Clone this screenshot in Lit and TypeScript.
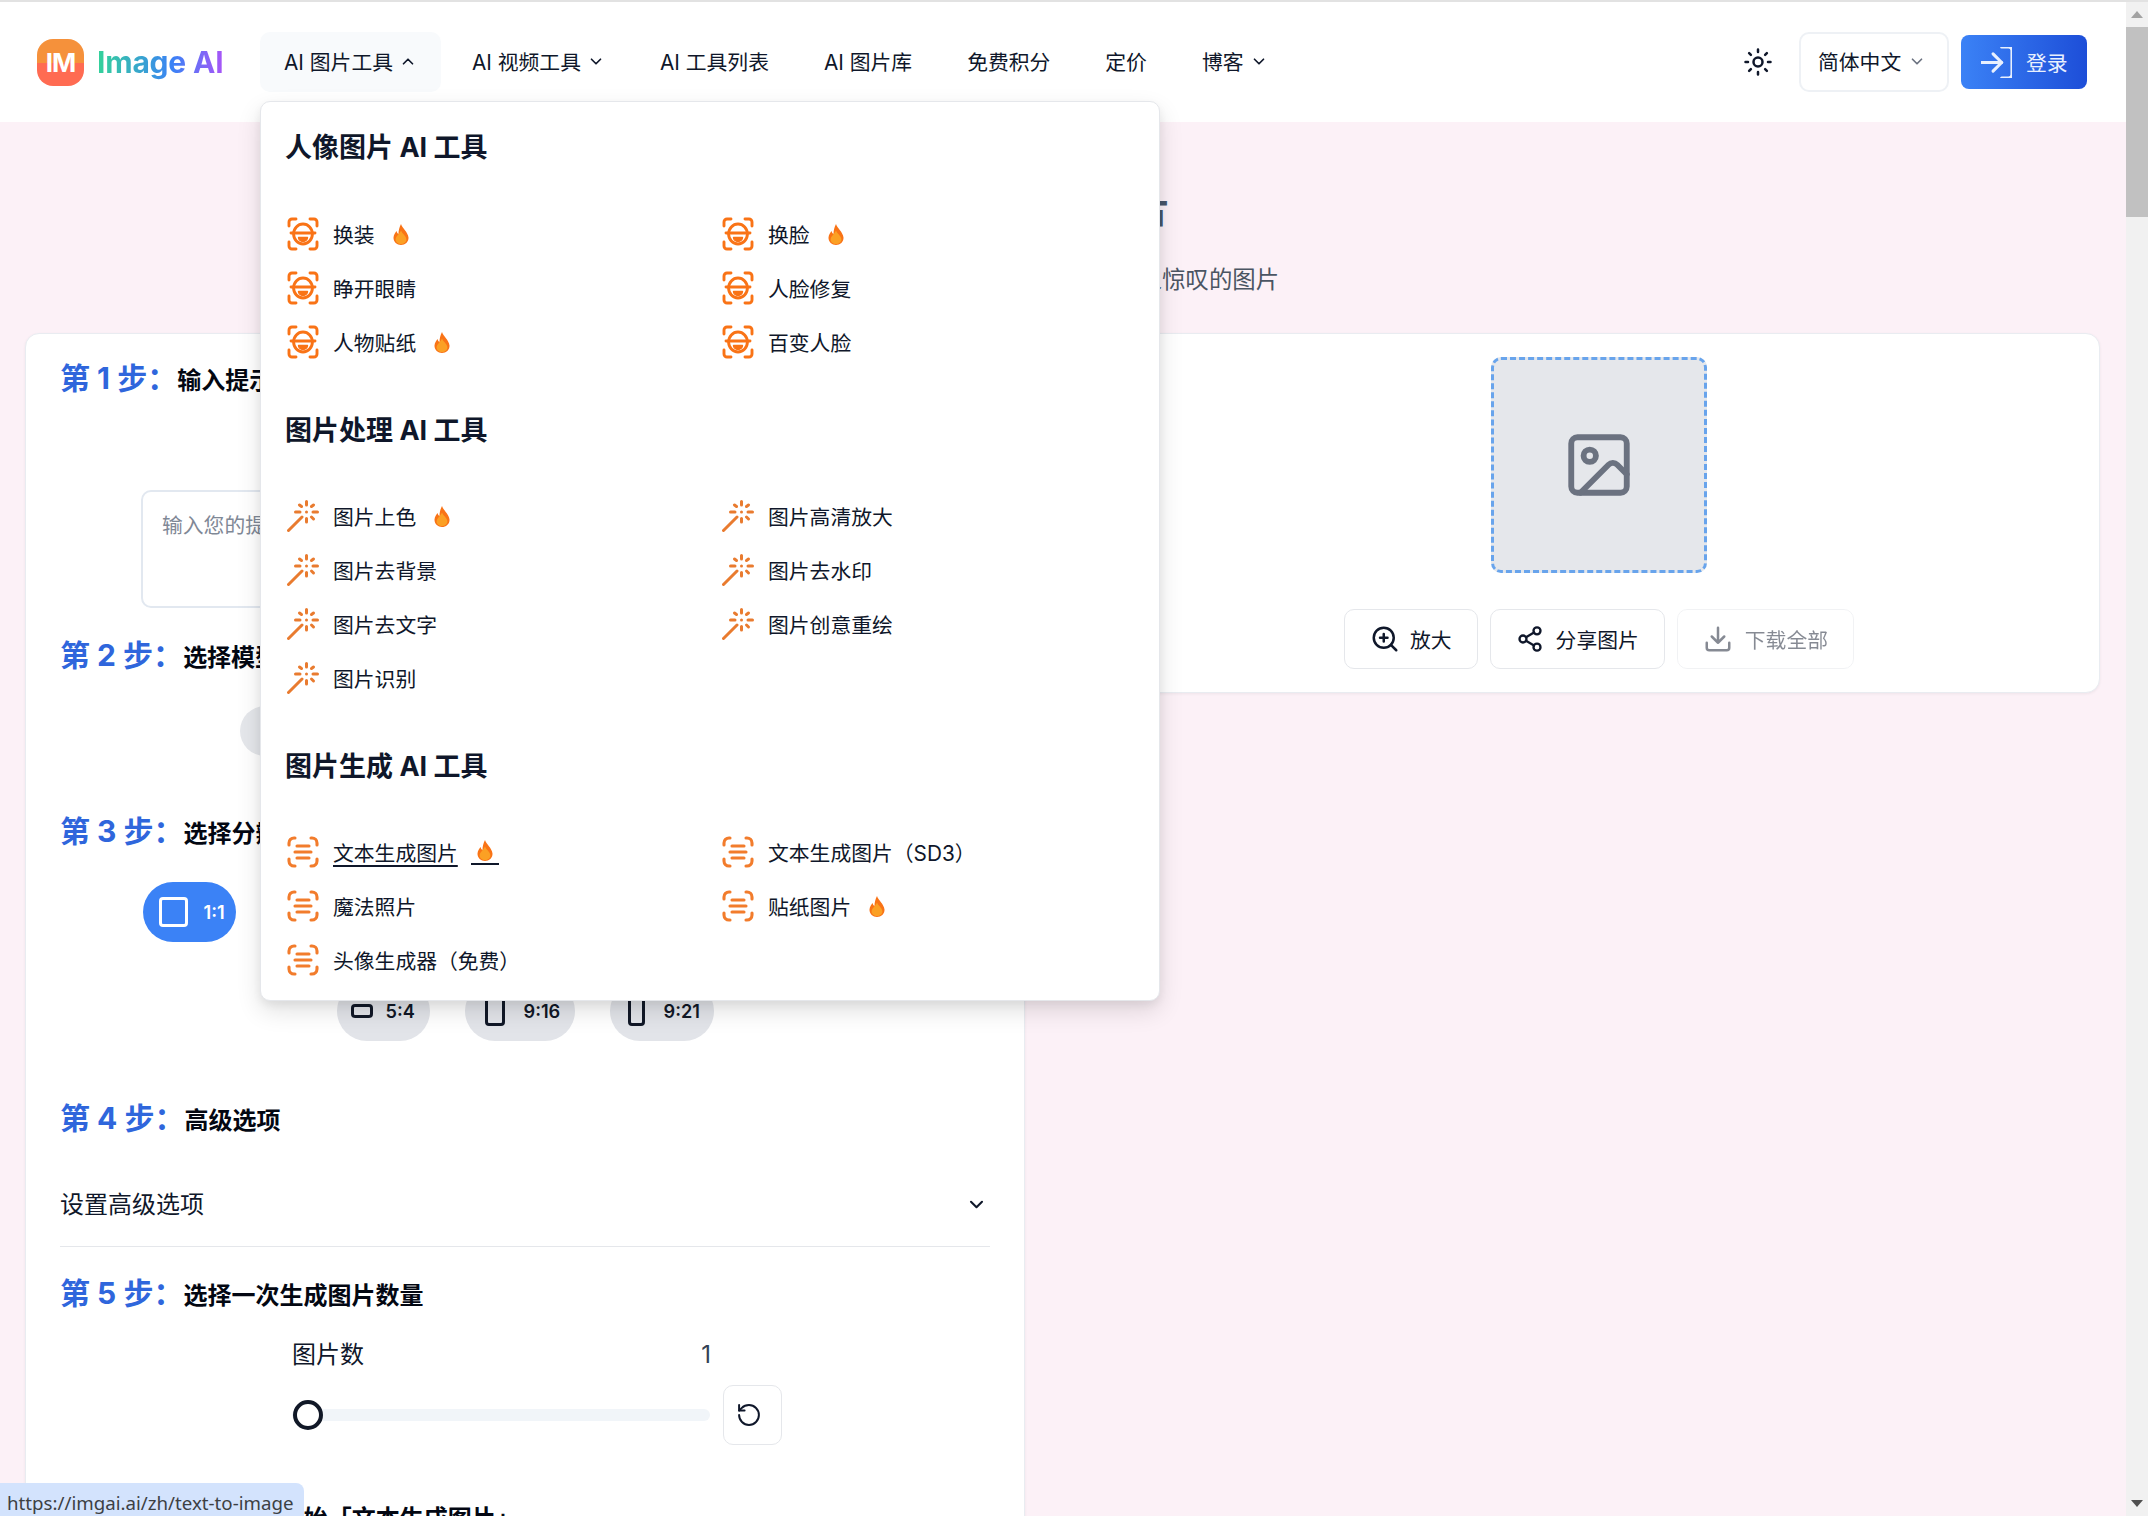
import { css, html, LitElement, svg } from "lit";
import { customElement } from "lit/decorators.js";

const chevron = (up = false) => html`
    <svg class="chev" viewBox="0 0 12 8" width="14" height="9" fill="none" stroke="currentColor" stroke-width="1.5"
         stroke-linecap="round" stroke-linejoin="round">
        <path d=${up ? "M2 6l4-4 4 4" : "M2 2l4 4 4-4"}></path>
    </svg>`;

const flame = html`
    <svg class="flame" viewBox="0 0 16 21" width="16" height="21">
        <path fill="#f97316" d="M8 0C9 4 15 8 15.5 13.5 15.8 18 12 21 8 21 4 21 .3 18 .5 13.5.7 10.5 2.5 8.5 3.5 7 4 8.5 4.5 9.5 5.5 10 5.5 6 6.5 3 8 0Z"></path>
        <path fill="#fba024" d="M8 6.5C9 9.5 13.4 12 13.4 15.5 13.4 18.2 11 20 8 20 5 20 2.6 18.2 2.6 15.5 2.6 12.5 6.5 10 8 6.5Z"></path>
    </svg>`;

const faceIcon = html`
    <svg class="ico" viewBox="0 0 32 34" width="32" height="34" fill="none" stroke="#f97316" stroke-width="2.9" stroke-linecap="round" stroke-linejoin="round">
        <path d="M2 9V5a3 3 0 0 1 3-3h4M23 2h4a3 3 0 0 1 3 3v4M30 25v4a3 3 0 0 1-3 3h-4M9 32H5a3 3 0 0 1-3-3v-4"></path>
        <ellipse cx="16" cy="17" rx="9.4" ry="10"></ellipse>
        <path d="M4 16h24"></path>
        <path d="M11.5 20.5h9a4.5 4 0 0 1-9 0Z" fill="#f97316" stroke-width="1.4"></path>
    </svg>`;

const wandIcon = html`
    <svg class="ico" viewBox="0 0 32 32" width="32" height="32" fill="none" stroke="#e97b2f" stroke-width="3" stroke-linecap="round">
        <path d="M1.5 30.5 15 17"></path>
        <path d="M19.5 1.5v3.5M19.5 18.5v3.5M8.5 12H13M26 12h4.5M12.5 5l2 1.5M26.5 5l-2 1.5M24.5 17l2 2"></path>
        <path d="M19.5 12h.01"></path>
    </svg>`;

const textIcon = html`
    <svg class="ico" viewBox="0 0 32 32" width="32" height="32" fill="none" stroke="#f27c2c" stroke-width="3.1" stroke-linecap="round">
        <path d="M2 9V7a5 5 0 0 1 5-5h1M24 2h1a5 5 0 0 1 5 5v2M30 23v2a5 5 0 0 1-5 5h-1M8 30H7a5 5 0 0 1-5-5v-2"></path>
        <path d="M10 10h12M8 16h16M10 22h12"></path>
    </svg>`;

type Tool = { name: string; hot?: boolean; active?: boolean };

const menu = [
    {
        title: "人像图片 AI 工具", icon: faceIcon,
        tools: [
            { name: "换装", hot: true }, { name: "换脸", hot: true },
            { name: "睁开眼睛" }, { name: "人脸修复" },
            { name: "人物贴纸", hot: true }, { name: "百变人脸" },
        ] as Tool[],
    },
    {
        title: "图片处理 AI 工具", icon: wandIcon,
        tools: [
            { name: "图片上色", hot: true }, { name: "图片高清放大" },
            { name: "图片去背景" }, { name: "图片去水印" },
            { name: "图片去文字" }, { name: "图片创意重绘" },
            { name: "图片识别" },
        ] as Tool[],
    },
    {
        title: "图片生成 AI 工具", icon: textIcon,
        tools: [
            { name: "文本生成图片", hot: true, active: true }, { name: "文本生成图片（SD3）" },
            { name: "魔法照片" }, { name: "贴纸图片", hot: true },
            { name: "头像生成器（免费）" },
        ] as Tool[],
    },
];

// w = pill width, pl = left padding, gap = icon to label, iw/ih = ratio shape
const ratios = [
    { label: "1:1", w: 93, pl: 16, gap: 16, iw: 29, ih: 30, on: true },
    { label: "16:9", w: 125, pl: 16, gap: 14, iw: 30, ih: 18 },
    { label: "4:3", w: 93, pl: 16, gap: 14, iw: 26, ih: 20 },
    { label: "3:2", w: 93, pl: 16, gap: 14, iw: 28, ih: 19 },
    { label: "3:4", w: 93, pl: 16, gap: 14, iw: 20, ih: 26 },
    { label: "2:3", w: 93, pl: 16, gap: 14, iw: 19, ih: 28 },
    { label: "5:4", w: 93, pl: 14, gap: 13, iw: 22, ih: 14 },
    { label: "9:16", w: 110, pl: 20, gap: 19, iw: 20, ih: 30 },
    { label: "9:21", w: 104, pl: 18, gap: 19, iw: 17, ih: 30 },
];

const lucide = (size: number, paths: unknown, box = "0 0 24 24", width = 2) => html`
    <svg viewBox=${box} width=${size} height=${size} fill="none" stroke="currentColor" stroke-width=${width}
         stroke-linecap="round" stroke-linejoin="round">${paths}</svg>`;

@customElement("app-root")
export class AppRoot extends LitElement {
    private step(n: number, sub: string) {
        return html`<h2 class="step"><span class="num">第 ${n} 步：</span><span class="sub">${sub}</span></h2>`;
    }

    private header() {
        return html`
            <header class="header">
                <a class="logo">
                    <span class="logo-mark">IM</span>
                    <span class="logo-text">Image AI</span>
                </a>
                <nav class="nav">
                    <a class="nav-item open">AI 图片工具 ${chevron(true)}</a>
                    <a class="nav-item">AI 视频工具 ${chevron()}</a>
                    <a class="nav-item">AI 工具列表</a>
                    <a class="nav-item">AI 图片库</a>
                    <a class="nav-item">免费积分</a>
                    <a class="nav-item">定价</a>
                    <a class="nav-item">博客 ${chevron()}</a>
                </nav>
                <div class="tools">
                    <span class="sun">${lucide(30, svg`
                        <circle cx="12" cy="12" r="3.6"></circle>
                        <path d="M12 2v2M12 20v2M4.9 4.9l1.4 1.4M17.7 17.7l1.4 1.4M2 12h2M20 12h2M6.3 17.7l-1.4 1.4M19.1 4.9l-1.4 1.4"></path>`)}</span>
                    <button class="lang">简体中文 <span class="lang-chev">${chevron()}</span></button>
                    <button class="login">
                        ${lucide(31, svg`
                            <path d="M15 3h4a2 2 0 0 1 2 2v14a2 2 0 0 1-2 2h-4"></path>
                            <path d="M10 17l5-5-5-5"></path>
                            <path d="M15 12H3"></path>`, "3 3 18 18", 1.8)}
                        登录
                    </button>
                </div>
            </header>`;
    }

    private dropdown() {
        return html`
            <div class="dropdown">
                ${menu.map((group) => html`
                    <section class="group">
                        <h3>${group.title}</h3>
                        <div class="tool-grid">
                            ${group.tools.map((tool) => html`
                                <a class="tool ${tool.active ? "active" : ""}">
                                    ${group.icon}
                                    <span class="tool-name">${tool.name}</span>
                                    ${tool.hot ? html`<span class="hot">${flame}</span>` : ""}
                                </a>`)}
                        </div>
                    </section>`)}
            </div>`;
    }

    private leftCard() {
        return html`
            <div class="card form">
                ${this.step(1, "输入提示词")}
                <div class="prompt">输入您的提示词</div>
                ${this.step(2, "选择模型")}
                <div class="models">
                    <span class="model">FLUX Schnell</span>
                    <span class="model">FLUX Dev</span>
                    <span class="model">FLUX Pro</span>
                </div>
                ${this.step(3, "选择分辨率")}
                <div class="ratios">
                    ${ratios.map((r) => html`
                        <span class="ratio ${r.on ? "on" : ""}" style="width:${r.w}px;padding-left:${r.pl}px;gap:${r.gap}px">
                            <i class="shape" style="width:${r.iw}px;height:${r.ih}px"></i>${r.label}
                        </span>`)}
                </div>
                ${this.step(4, "高级选项")}
                <div class="advanced">设置高级选项 ${chevron()}</div>
                ${this.step(5, "选择一次生成图片数量")}
                <div class="count">
                    <div class="count-head"><span>图片数</span><span class="value">1</span></div>
                    <div class="count-row">
                        <div class="track"><span class="thumb"></span></div>
                        <button class="reset">${lucide(22, svg`
                            <path d="M3 12a9 9 0 1 0 9-9 9.75 9.75 0 0 0-6.74 2.74L3 8"></path>
                            <path d="M3 3v5h5"></path>`, "2 2 20 20", 1.8)}</button>
                    </div>
                </div>
                ${this.step(6, "点击按钮开始「文本生成图片」")}
            </div>`;
    }

    private rightCard() {
        return html`
            <div class="card result">
                <div class="placeholder">
                    ${lucide(74, svg`
                        <rect x="3" y="3" width="18" height="18" rx="2"></rect>
                        <circle cx="9" cy="9" r="2"></circle>
                        <path d="m21 15-3.086-3.086a2 2 0 0 0-2.828 0L6 21"></path>`, "0 0 24 24", 1.9)}
                </div>
                <div class="actions">
                    <button class="btn zoom">${lucide(30, svg`
                        <circle cx="11" cy="11" r="8"></circle>
                        <path d="m21 21-4.3-4.3M11 8v6M8 11h6"></path>`)} 放大</button>
                    <button class="btn">${lucide(28, svg`
                        <circle cx="18" cy="5" r="3"></circle>
                        <circle cx="6" cy="12" r="3"></circle>
                        <circle cx="18" cy="19" r="3"></circle>
                        <path d="m8.59 13.51 6.83 3.98M15.41 6.51l-6.82 3.98"></path>`)} 分享图片</button>
                    <button class="btn off">${lucide(30, svg`
                        <path d="M21 15v4a2 2 0 0 1-2 2H5a2 2 0 0 1-2-2v-4"></path>
                        <path d="m7 10 5 5 5-5M12 15V3"></path>`)} 下载全部</button>
                </div>
            </div>`;
    }

    render() {
        return html`
            <div class="strip"></div>
            <div class="window">
                <div class="page">
                    ${this.header()}
                    <main class="main">
                        <div class="intro">
                            <h1>文本生成图片</h1>
                            <p>使用 AI 将文字描述转换为令人惊叹的图片</p>
                        </div>
                        <div class="columns">
                            ${this.leftCard()}
                            ${this.rightCard()}
                        </div>
                    </main>
                    ${this.dropdown()}
                </div>
                <div class="scrollbar">
                    <span class="arrow"></span>
                    <span class="scroll-thumb"></span>
                    <span class="arrow down"></span>
                </div>
            </div>
            <div class="status">https://imgai.ai/zh/text-to-image</div>
        `;
    }

    static styles = css`
      :host {
        display: block;
        position: relative;
        width: 2148px;
        height: 1516px;
        overflow: hidden;
        font-family: Inter, "Noto Sans CJK SC", sans-serif;
        font-size: 20.8px;
        color: #0f172a;
      }

      * {
        box-sizing: border-box;
      }

      h1, h2, h3, p {
        margin: 0;
      }

      button {
        font: inherit;
        color: inherit;
        background: none;
        border: 0;
        padding: 0;
      }

      .strip {
        height: 2px;
        background: #e2e2e2;
      }

      .window {
        display: flex;
        height: 1514px;
      }

      .page {
        position: relative;
        flex: 1;
        min-width: 0;
        background: #fcf1f7;
        overflow: hidden;
      }

      .header {
        display: flex;
        align-items: center;
        height: 120px;
        padding: 0 39px 0 37px;
        background: white;
      }

      .logo {
        display: flex;
        align-items: center;
        width: 215px;
        gap: 13px;
        margin-top: 1px;
      }

      .logo-mark {
        display: flex;
        align-items: center;
        justify-content: center;
        width: 47px;
        height: 47px;
        border-radius: 16px;
        background: linear-gradient(#f5913b 0 50%, #ff6b52 50% 100%);
        color: white;
        font-size: 26px;
        font-weight: 700;
        letter-spacing: -1px;
      }

      .logo-text {
        margin-top: -2px;
        font-size: 30px;
        font-weight: 700;
        letter-spacing: -0.2px;
        background: linear-gradient(90deg, #34d399, #3b82f6 60%, #a855f7);
        -webkit-background-clip: text;
        background-clip: text;
        color: transparent;
      }

      .nav {
        display: flex;
        gap: 7px;
        margin-left: 8px;
      }

      .nav-item {
        display: flex;
        align-items: center;
        gap: 8px;
        height: 60px;
        padding: 0 24px 2px;
        border-radius: 10px;
        white-space: nowrap;
      }

      .nav-item .chev {
        margin-right: 2px;
      }

      .nav-item.open {
        background: #f8fafc;
      }

      .tools {
        display: flex;
        align-items: center;
        margin-left: auto;
      }

      .sun {
        display: flex;
        margin-right: 26px;
      }

      .lang {
        display: flex;
        align-items: center;
        gap: 9px;
        width: 150px;
        height: 60px;
        padding: 0 0 2px 17px;
        border: 2px solid #eef1f5;
        border-radius: 10px;
      }

      .lang-chev {
        display: flex;
        color: #6b7280;
      }

      .login {
        display: flex;
        align-items: center;
        gap: 14px;
        width: 126px;
        height: 54px;
        margin-left: 12px;
        padding-left: 20px;
        border-radius: 8px;
        background: linear-gradient(90deg, #3b82f6, #1d4ed8);
        color: #e8f0fe;
      }

      .main {
        padding: 66px 26px 0 25px;
      }

      .intro {
        text-align: center;
      }

      .intro h1 {
        font-size: 36px;
        line-height: 44px;
        font-weight: 700;
        color: #475569;
      }

      .intro p {
        margin-top: 31px;
        font-size: 23.4px;
        line-height: 34px;
        color: #4b5563;
      }

      .columns {
        display: grid;
        grid-template-columns: 1000px 1002px;
        justify-content: space-between;
        align-items: start;
        margin-top: 36px;
      }

      .card {
        background: white;
        border: 1px solid #e9ecf1;
        border-radius: 14px;
        box-shadow: 0 1px 3px rgba(0, 0, 0, 0.06);
      }

      .form {
        height: 1300px;
        padding: 24px 34px;
      }

      .step {
        display: block;
        height: 40px;
        line-height: 40px;
        font-weight: 700;
        white-space: nowrap;
      }

      .num {
        font-size: 30px;
        color: #2f66dc;
      }

      .sub {
        font-size: 24px;
        color: #030712;
      }

      .prompt {
        width: 768px;
        height: 118px;
        margin: 92px 0 27px 81px;
        padding: 17px 19px;
        border: 2px solid #e2e8f0;
        border-radius: 10px;
        color: #7f8896;
      }

      .models {
        display: flex;
        justify-content: center;
        gap: 36px;
        margin: 31px 0 55px;
      }

      .model {
        display: flex;
        align-items: center;
        justify-content: center;
        width: 166px;
        height: 50px;
        border-radius: 25px;
        background: #e5e7eb;
        font-size: 18px;
        font-weight: 600;
      }

      .ratios {
        display: flex;
        flex-wrap: wrap;
        justify-content: center;
        gap: 39px 35px;
        width: 800px;
        margin: 31px auto 57px;
      }

      .ratio {
        display: flex;
        align-items: center;
        height: 60px;
        border-radius: 30px;
        background: #e2e4e9;
        color: #111827;
        font-size: 18.2px;
        font-weight: 600;
      }

      .ratio.on {
        background: #3b82f6;
        color: white;
      }

      .shape {
        display: block;
        border: 3px solid currentColor;
        border-radius: 4px;
      }

      .advanced {
        display: flex;
        align-items: center;
        justify-content: space-between;
        height: 86px;
        margin: 23px 0 26px;
        padding: 2px 5px 0 0;
        border-bottom: 1px solid #e5e7eb;
        font-size: 24px;
        line-height: 1;
      }

      .advanced .chev {
        width: 17px;
        height: 11px;
      }

      .count {
        width: 490px;
        margin: 24px 0 51px 232px;
      }

      .count-head {
        display: flex;
        justify-content: space-between;
        width: 419px;
        height: 36px;
        line-height: 36px;
        font-size: 24px;
      }

      .value {
        color: #334155;
      }

      .count-row {
        display: flex;
        align-items: center;
        gap: 13px;
        margin-top: 12px;
      }

      .track {
        position: relative;
        flex: 1;
        height: 12px;
        border-radius: 6px;
        background: #f1f5f9;
      }

      .thumb {
        position: absolute;
        left: 1px;
        top: -9px;
        width: 30px;
        height: 30px;
        border: 4px solid #111827;
        border-radius: 50%;
        background: white;
      }

      .reset {
        display: flex;
        align-items: center;
        justify-content: center;
        width: 59px;
        height: 60px;
        padding-right: 8px;
        border: 1px solid #e5e7eb;
        border-radius: 10px;
      }

      .result {
        display: flex;
        flex-direction: column;
        align-items: center;
        padding: 23px 0;
      }

      .placeholder {
        display: flex;
        align-items: center;
        justify-content: center;
        width: 216px;
        height: 216px;
        border: 3px dashed #68a4ec;
        border-radius: 10px;
        background: #e5e7eb;
        color: #6b7280;
      }

      .actions {
        display: flex;
        gap: 12px;
        margin-top: 36px;
      }

      .btn {
        display: flex;
        align-items: center;
        gap: 12px;
        height: 60px;
        padding: 0 25px;
        border: 1px solid #e5e7eb;
        border-radius: 10px;
      }

      .btn.zoom {
        gap: 10px;
      }

      .btn.off {
        opacity: 0.5;
      }

      .dropdown {
        position: absolute;
        left: 260px;
        top: 99px;
        width: 900px;
        height: 900px;
        padding: 28px 24px 12px 25px;
        background: white;
        border: 1px solid #e5e7eb;
        border-radius: 10px;
        box-shadow: 0 10px 24px rgba(0, 0, 0, 0.12), 0 4px 8px rgba(0, 0, 0, 0.06);
      }

      .group + .group {
        margin-top: 43.5px;
      }

      .group h3 {
        height: 36px;
        margin-left: -1px;
        line-height: 36px;
        font-size: 27px;
        font-weight: 700;
      }

      .tool-grid {
        display: grid;
        grid-template-columns: 435px 435px;
        grid-auto-rows: 54px;
        margin-top: 41px;
      }

      .group + .group .tool-grid {
        margin-top: 40.5px;
      }

      .tool {
        display: flex;
        align-items: center;
        height: 54px;
        white-space: nowrap;
      }

      .ico {
        flex: none;
        margin: 0 14px 0 1px;
      }

      .hot {
        display: flex;
        margin-left: 18px;
      }

      .tool.active .tool-name {
        text-decoration: underline;
        text-underline-offset: 4px;
      }

      .tool.active .hot {
        justify-content: center;
        width: 28px;
        padding-bottom: 2px;
        margin-left: 13px;
        border-bottom: 2px solid #0f172a;
      }

      .scrollbar {
        display: flex;
        flex-direction: column;
        width: 22px;
        background: #f1f1f1;
      }

      .arrow {
        height: 25px;
        flex: none;
        display: flex;
        align-items: center;
        justify-content: center;
      }

      .arrow::before {
        content: "";
        border: 6px solid transparent;
        border-top: 0;
        border-bottom: 7px solid #a3a3a3;
      }

      .arrow.down {
        margin-top: auto;
      }

      .arrow.down::before {
        border-bottom: 0;
        border-top: 7px solid #505050;
      }

      .scroll-thumb {
        height: 190px;
        background: #c1c1c1;
      }

      .status {
        position: absolute;
        left: 0;
        bottom: 0;
        width: 304px;
        height: 33px;
        padding: 3px 0 0 7px;
        line-height: 33px;
        border-top-right-radius: 8px;
        background: #d3e3fd;
        color: #3c4043;
        font-family: "Noto Sans", sans-serif;
        font-size: 18.7px;
        white-space: nowrap;
      }
    `;
}
